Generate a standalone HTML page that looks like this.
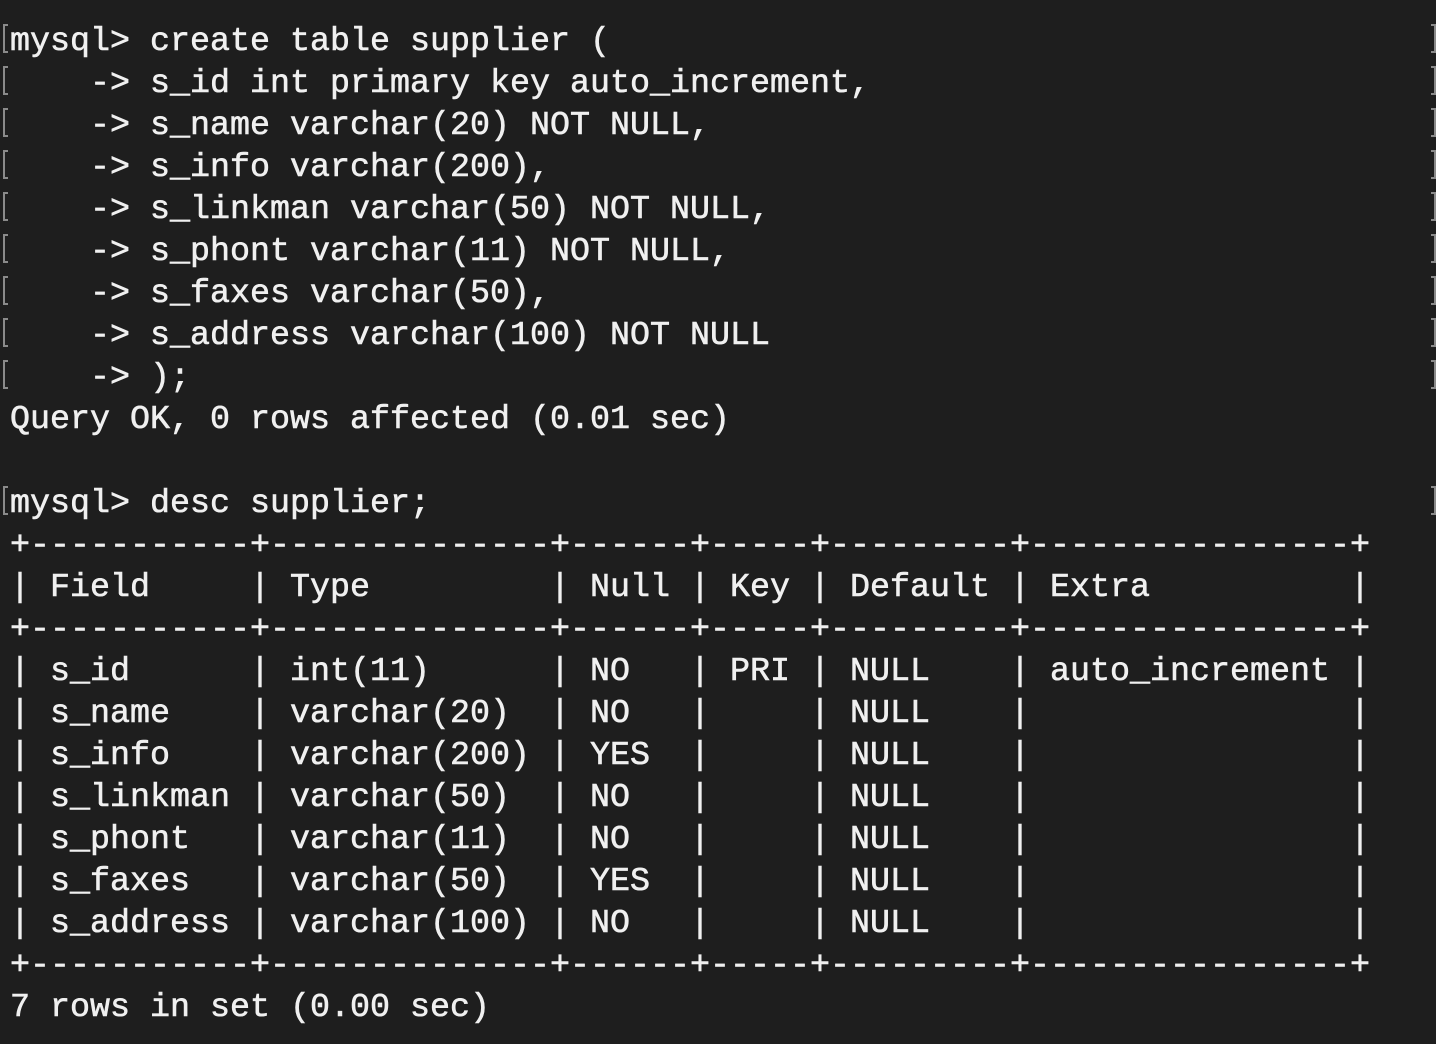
<!DOCTYPE html>
<html><head><style>
html,body{margin:0;padding:0;background:#1e1e1e;width:1436px;height:1044px;overflow:hidden}
pre{position:absolute;left:10px;top:21px;margin:0;font-family:"Liberation Mono",monospace;font-size:33.33px;line-height:42px;color:#f0f0f0;-webkit-text-stroke:0.6px #f0f0f0}
.b{position:absolute;width:5px;height:29px;border:2px solid #8a8a8a;box-sizing:border-box}
.l{left:3px;border-right:none}
.r{left:1431px;border-left:none}
</style></head><body>
<pre>mysql&gt; create table supplier (
    -&gt; s_id int primary key auto_increment,
    -&gt; s_name varchar(20) NOT NULL,
    -&gt; s_info varchar(200),
    -&gt; s_linkman varchar(50) NOT NULL,
    -&gt; s_phont varchar(11) NOT NULL,
    -&gt; s_faxes varchar(50),
    -&gt; s_address varchar(100) NOT NULL
    -&gt; );
Query OK, 0 rows affected (0.01 sec)

mysql&gt; desc supplier;
+-----------+--------------+------+-----+---------+----------------+
| Field     | Type         | Null | Key | Default | Extra          |
+-----------+--------------+------+-----+---------+----------------+
| s_id      | int(11)      | NO   | PRI | NULL    | auto_increment |
| s_name    | varchar(20)  | NO   |     | NULL    |                |
| s_info    | varchar(200) | YES  |     | NULL    |                |
| s_linkman | varchar(50)  | NO   |     | NULL    |                |
| s_phont   | varchar(11)  | NO   |     | NULL    |                |
| s_faxes   | varchar(50)  | YES  |     | NULL    |                |
| s_address | varchar(100) | NO   |     | NULL    |                |
+-----------+--------------+------+-----+---------+----------------+
7 rows in set (0.00 sec)</pre>
<div class="b l" style="top:24px"></div><div class="b r" style="top:24px"></div>
<div class="b l" style="top:66px"></div><div class="b r" style="top:66px"></div>
<div class="b l" style="top:108px"></div><div class="b r" style="top:108px"></div>
<div class="b l" style="top:150px"></div><div class="b r" style="top:150px"></div>
<div class="b l" style="top:192px"></div><div class="b r" style="top:192px"></div>
<div class="b l" style="top:234px"></div><div class="b r" style="top:234px"></div>
<div class="b l" style="top:276px"></div><div class="b r" style="top:276px"></div>
<div class="b l" style="top:318px"></div><div class="b r" style="top:318px"></div>
<div class="b l" style="top:360px"></div><div class="b r" style="top:360px"></div>
<div class="b l" style="top:486px"></div><div class="b r" style="top:486px"></div>
</body></html>
